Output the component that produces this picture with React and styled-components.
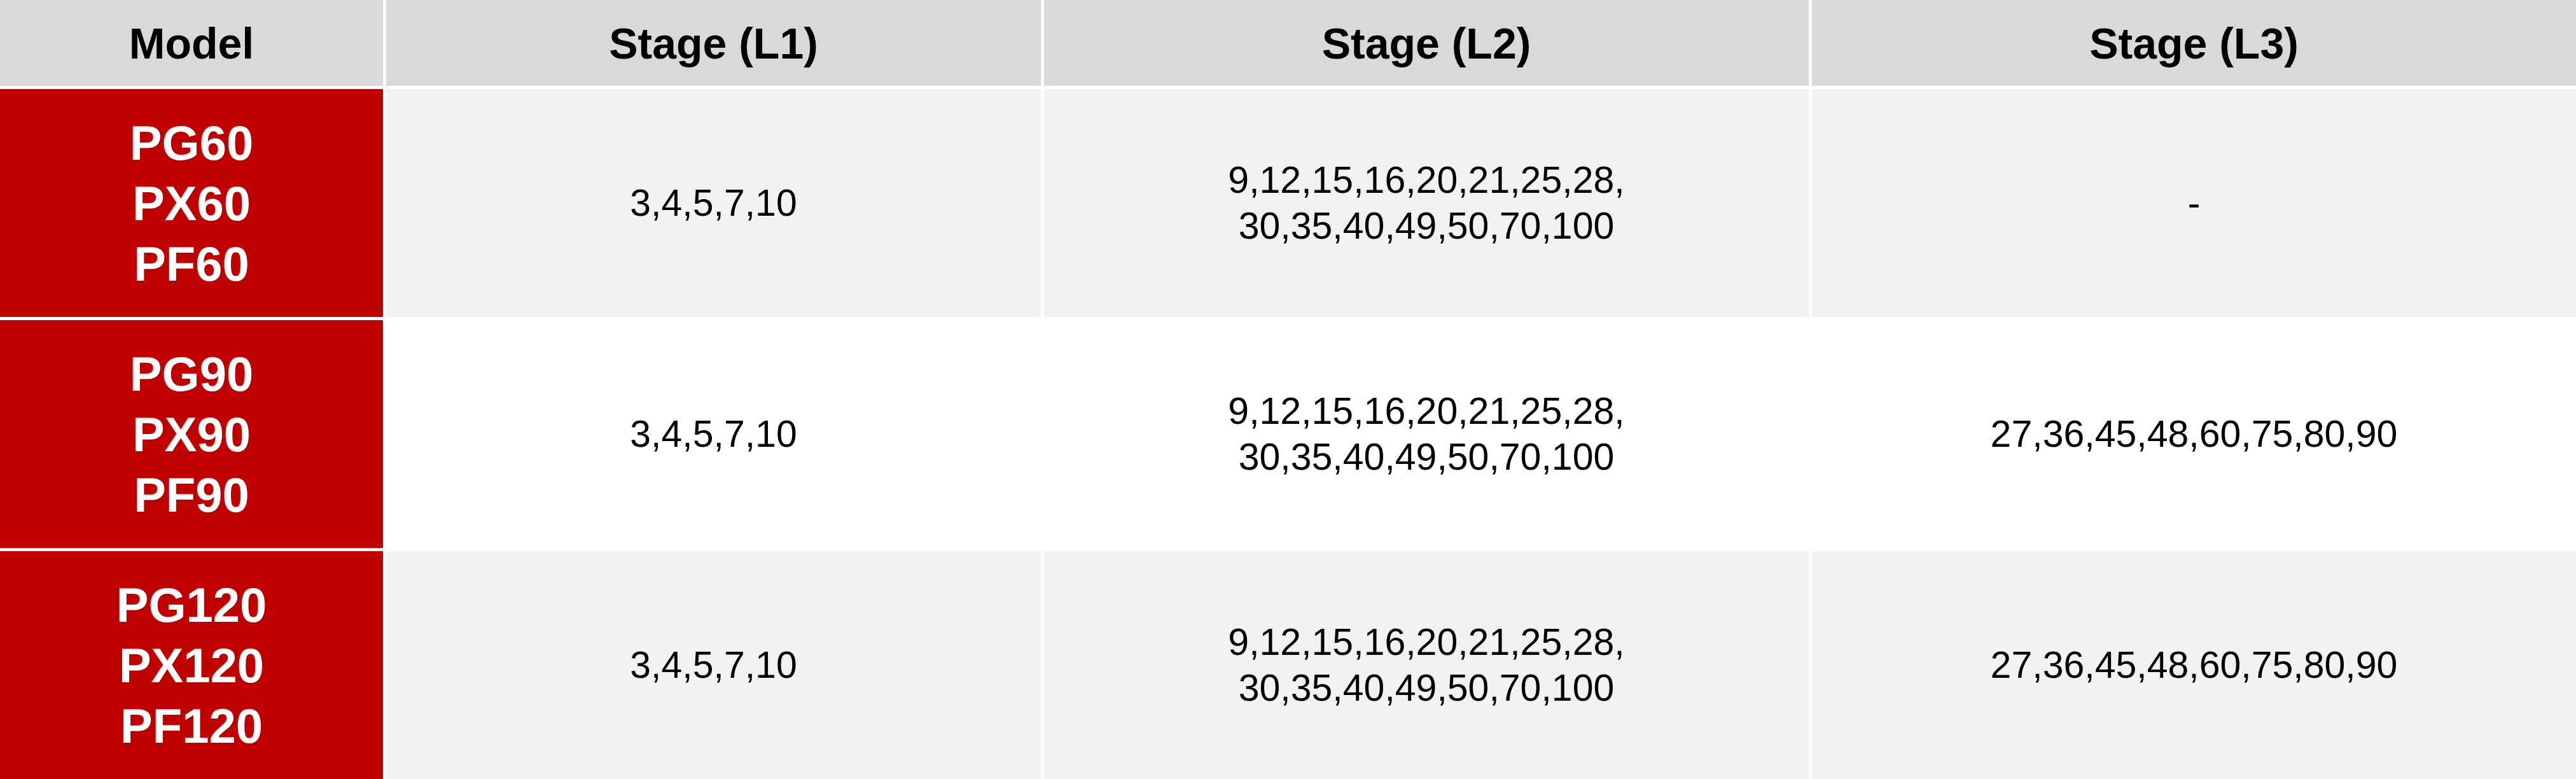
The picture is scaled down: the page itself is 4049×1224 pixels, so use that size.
import React from 'react'
import styled, { createGlobalStyle } from 'styled-components'

const GlobalStyle = createGlobalStyle`
  html, body {
    margin: 0;
    padding: 0;
    background: #ffffff;
  }
`

const Table = styled.div`
  display: grid;
  grid-template-columns: 602px 1029px 1202px 1201px;
  grid-template-rows: 135px repeat(3, 358px);
  gap: 5px;
  width: 4049px;
  background: #ffffff;
  font-family: "Liberation Sans", Arial, sans-serif;
  color: #000000;
`

const HeadCell = styled.div`
  display: flex;
  align-items: center;
  justify-content: center;
  background: #d9d9d9;
  font-size: 68px;
  font-weight: 700;
`

const ModelCell = styled.div`
  display: flex;
  flex-direction: column;
  align-items: center;
  justify-content: center;
  background: #c00000;
  color: #ffffff;
  font-size: 76px;
  font-weight: 700;
  line-height: 95px;
  text-align: center;
`

const DataCell = styled.div`
  display: flex;
  align-items: center;
  justify-content: center;
  background: ${p => (p.$shade ? '#f2f2f2' : '#ffffff')};
  font-size: 59px;
  line-height: 72px;
  text-align: center;
`

const headers = ['Model', 'Stage (L1)', 'Stage (L2)', 'Stage (L3)']

const l2 = ['9,12,15,16,20,21,25,28,', '30,35,40,49,50,70,100']
const l3 = '27,36,45,48,60,75,80,90'

const rows = [
  { size: '60', l1: '3,4,5,7,10', l2, l3: '-' },
  { size: '90', l1: '3,4,5,7,10', l2, l3 },
  { size: '120', l1: '3,4,5,7,10', l2, l3 },
]

const Lines = ({ items }) =>
  items.map((t, i) => (
    <React.Fragment key={i}>
      {i > 0 && <br />}
      {t}
    </React.Fragment>
  ))

export default function App() {
  return (
    <>
      <GlobalStyle />
      <Table>
        {headers.map(h => (
          <HeadCell key={h}>{h}</HeadCell>
        ))}
        {rows.map((r, i) => {
          const shade = i % 2 === 0
          return (
            <React.Fragment key={r.size}>
              <ModelCell>
                <div>PG{r.size}</div>
                <div>PX{r.size}</div>
                <div>PF{r.size}</div>
              </ModelCell>
              <DataCell $shade={shade}>{r.l1}</DataCell>
              <DataCell $shade={shade}>
                <div>
                  <Lines items={r.l2} />
                </div>
              </DataCell>
              <DataCell $shade={shade}>{r.l3}</DataCell>
            </React.Fragment>
          )
        })}
      </Table>
    </>
  )
}
